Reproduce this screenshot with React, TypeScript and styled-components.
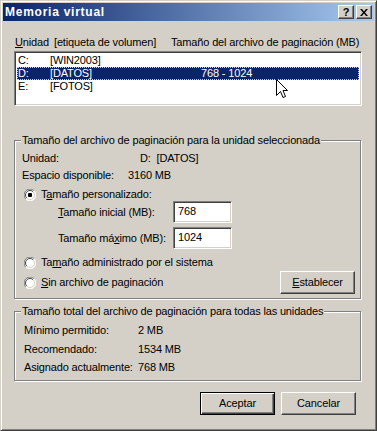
import React from "react";
import styled, { createGlobalStyle } from "styled-components";

const GlobalStyle = createGlobalStyle`
  html, body {
    margin: 0;
    padding: 0;
    background: #d4d0c8;
  }
  body {
    font-family: "Liberation Sans", Arial, sans-serif;
    font-size: 11px;
    letter-spacing: -0.15px;
    color: #000;
  }
`;

// the outer dialog frame, raised 3px border
const Window = styled.div`
  position: relative;
  width: 377px;
  height: 431px;
  box-sizing: border-box;
  background: #d4d0c8;
  border: 1px solid;
  border-color: #d4d0c8 #404040 #404040 #d4d0c8;
  box-shadow: inset 1px 1px #fff, inset -1px -1px #808080;
  padding: 2px;
  overflow: hidden;
`;

const TitleBar = styled.div`
  height: 18px;
  display: flex;
  align-items: center;
  padding: 0 2px;
  background: linear-gradient(to right, #0a246a, #a6caf0);
`;

const Title = styled.div`
  flex: 1;
  color: #fff;
  font-weight: bold;
  font-size: 12px;
  letter-spacing: 0.75px;
  line-height: 14px;
`;

const CaptionButton = styled.div<{ $gap?: number }>`
  width: 16px;
  height: 14px;
  box-sizing: border-box;
  margin-left: ${(p) => p.$gap ?? 0}px;
  background: #d4d0c8;
  border: 1px solid;
  border-color: #fff #404040 #404040 #fff;
  box-shadow: inset -1px -1px #808080;
  display: flex;
  align-items: center;
  justify-content: center;
  font-weight: bold;
  font-size: 11px;
  line-height: 12px;
  letter-spacing: 0;
`;

const Main = styled.div`
  padding: 0 12px 0 11px;
`;

const HeaderRow = styled.div`
  display: flex;
  margin-top: 15px;
  line-height: 13px;
  white-space: nowrap;
`;

const Col = styled.span<{ $w?: number; $pad?: number }>`
  display: inline-block;
  width: ${(p) => (p.$w ? `${p.$w}px` : "auto")};
  padding-left: ${(p) => p.$pad ?? 0}px;
  white-space: nowrap;
`;

const ListBox = styled.div`
  margin-top: 2px;
  height: 55px;
  box-sizing: border-box;
  background: #fff;
  border: 1px solid;
  border-color: #808080 #fff #fff #808080;
  box-shadow: inset 1px 1px #404040, inset -1px -1px #d4d0c8;
  padding: 2px 2px;
`;

const ListRow = styled.div<{ $selected?: boolean }>`
  display: flex;
  height: 13px;
  line-height: 13px;
  padding-left: 1px;
  white-space: nowrap;
  background: ${(p) => (p.$selected ? "#0a246a" : "transparent")};
  color: ${(p) => (p.$selected ? "#fff" : "#000")};
  outline: ${(p) => (p.$selected ? "1px dotted #c8cce0" : "none")};
  outline-offset: -1px;
`;

// etched group box: fieldset with the caption sitting on the top line
const Group = styled.fieldset<{ $top: number }>`
  margin: ${(p) => p.$top}px 0 0 0;
  padding: 0;
  min-width: 0;
  border: 1px solid #808080;
  box-shadow: inset 1px 1px #fff, 1px 1px #fff;
  width: 347px;
  box-sizing: border-box;
`;

const Legend = styled.legend`
  margin-left: 6px;
  padding: 0 1px;
  line-height: 13px;
  background: #d4d0c8;
  white-space: nowrap;
`;

const GroupBody = styled.div<{ $padTop: number; $padBottom: number; $padLeft: number }>`
  padding: ${(p) => p.$padTop}px 5px ${(p) => p.$padBottom}px ${(p) => p.$padLeft}px;
`;

const InfoRow = styled.div<{ $mt?: number }>`
  display: flex;
  line-height: 13px;
  height: 13px;
  margin-top: ${(p) => p.$mt ?? 0}px;
  white-space: nowrap;
`;

const RadioRow = styled.div<{ $mt?: number; $h?: number }>`
  display: flex;
  align-items: center;
  height: ${(p) => p.$h ?? 13}px;
  margin-top: ${(p) => p.$mt ?? 0}px;
  padding-left: 2px;
  line-height: 13px;
  white-space: nowrap;
`;

const RadioLabel = styled.span`
  margin-left: 5px;
  flex: 1;
`;

const FieldRow = styled.div<{ $mt?: number }>`
  display: flex;
  align-items: center;
  height: 22px;
  margin-top: ${(p) => p.$mt ?? 0}px;
  padding-left: 36px;
  white-space: nowrap;
`;

const FieldLabel = styled.span`
  width: 115px;
  line-height: 13px;
`;

const TextField = styled.div`
  width: 59px;
  height: 22px;
  box-sizing: border-box;
  background: #fff;
  border: 1px solid;
  border-color: #808080 #fff #fff #808080;
  box-shadow: inset 1px 1px #404040, inset -1px -1px #d4d0c8;
  padding: 3px 0 0 4px;
  line-height: 13px;
`;

const Button = styled.div<{ $default?: boolean }>`
  width: 75px;
  height: 23px;
  box-sizing: border-box;
  display: flex;
  align-items: center;
  justify-content: center;
  background: #d4d0c8;
  border: 1px solid;
  border-color: ${(p) => (p.$default ? "#000" : "#fff #404040 #404040 #fff")};
  box-shadow: ${(p) =>
    p.$default
      ? "inset 1px 1px #fff, inset -1px -1px #404040, inset -2px -2px #808080"
      : "inset -1px -1px #808080"};
  line-height: 13px;
`;

const ButtonBar = styled.div`
  display: flex;
  justify-content: flex-end;
  gap: 6px;
  margin-top: 11px;
  padding-right: 6px;
`;

const Cursor = styled.svg`
  position: absolute;
  left: 275px;
  top: 78px;
`;

function Radio({ checked }: { checked?: boolean }) {
  return (
    <svg width="12" height="12" viewBox="0 0 12 12">
      <circle cx="6" cy="6" r="5.5" fill="#fff" stroke="none" />
      <path d="M10.2 1.8 A5.5 5.5 0 0 0 1.8 10.2" fill="none" stroke="#808080" />
      <path d="M9.2 2.8 A4.5 4.5 0 0 0 2.8 9.2" fill="none" stroke="#404040" />
      <path d="M1.8 10.2 A5.5 5.5 0 0 0 10.2 1.8" fill="none" stroke="#fff" />
      <path d="M2.8 9.2 A4.5 4.5 0 0 0 9.2 2.8" fill="none" stroke="#d4d0c8" />
      {checked && <rect x="4" y="4" width="4" height="4" rx="1" fill="#000" />}
    </svg>
  );
}

export default function App() {
  return (
    <>
      <GlobalStyle />
      <Window>
        <TitleBar>
          <Title>Memoria virtual</Title>
          <CaptionButton>?</CaptionButton>
          <CaptionButton $gap={2}>
            <svg width="8" height="7" viewBox="0 0 8 7">
              <path d="M0 0h2l2 2.5L6 0h2L5 3.5 8 7H6L4 4.5 2 7H0l3-3.5z" fill="#000" />
            </svg>
          </CaptionButton>
        </TitleBar>
        <Main>
          <HeaderRow>
            <Col $w={39} $pad={1}>
              <u>U</u>nidad
            </Col>
            <Col $w={117}>[etiqueta de volumen]</Col>
            <Col>Tamaño del archivo de paginación (MB)</Col>
          </HeaderRow>
          <ListBox>
            <ListRow>
              <Col $w={32}>C:</Col>
              <Col $w={151}>[WIN2003]</Col>
            </ListRow>
            <ListRow $selected>
              <Col $w={32}>D:</Col>
              <Col $w={151}>[DATOS]</Col>
              <Col>768 - 1024</Col>
            </ListRow>
            <ListRow>
              <Col $w={32}>E:</Col>
              <Col $w={151}>[FOTOS]</Col>
            </ListRow>
          </ListBox>

          <Group $top={28}>
            <Legend>Tamaño del archivo de paginación para la unidad seleccionada</Legend>
            <GroupBody $padTop={5} $padBottom={4} $padLeft={7}>
              <InfoRow>
                <Col $w={118}>Unidad:</Col>
                <Col>D:&nbsp; [DATOS]</Col>
              </InfoRow>
              <InfoRow $mt={4}>
                <Col $w={106}>Espacio disponible:</Col>
                <Col>3160 MB</Col>
              </InfoRow>
              <RadioRow $mt={6}>
                <Radio checked />
                <RadioLabel>
                  T<u>a</u>maño personalizado:
                </RadioLabel>
              </RadioRow>
              <FieldRow>
                <FieldLabel>
                  <u>T</u>amaño inicial (MB):
                </FieldLabel>
                <TextField>768</TextField>
              </FieldRow>
              <FieldRow $mt={4}>
                <FieldLabel>
                  Tamaño má<u>x</u>imo (MB):
                </FieldLabel>
                <TextField>1024</TextField>
              </FieldRow>
              <RadioRow $mt={7}>
                <Radio />
                <RadioLabel>
                  Ta<u>m</u>año administrado por el sistema
                </RadioLabel>
              </RadioRow>
              <RadioRow $mt={2} $h={23}>
                <Radio />
                <RadioLabel>
                  <u>S</u>in archivo de paginación
                </RadioLabel>
                <Button>
                  <span>
                    <u>E</u>stablecer
                  </span>
                </Button>
              </RadioRow>
            </GroupBody>
          </Group>

          <Group $top={6}>
            <Legend>Tamaño total del archivo de paginación para todas las unidades</Legend>
            <GroupBody $padTop={6} $padBottom={6} $padLeft={9}>
              <InfoRow>
                <Col $w={114}>Mínimo permitido:</Col>
                <Col>2 MB</Col>
              </InfoRow>
              <InfoRow $mt={6}>
                <Col $w={114}>Recomendado:</Col>
                <Col>1534 MB</Col>
              </InfoRow>
              <InfoRow $mt={5}>
                <Col $w={114}>Asignado actualmente:</Col>
                <Col>768 MB</Col>
              </InfoRow>
            </GroupBody>
          </Group>

          <ButtonBar>
            <Button $default>Aceptar</Button>
            <Button>Cancelar</Button>
          </ButtonBar>
        </Main>
        <Cursor width="12" height="19" viewBox="0 0 12 19">
          <path
            d="M0.5 0.5 L0.5 16.5 L4.5 12.5 L7 18.5 L9.5 17.5 L7 11.5 L11.5 11.5 Z"
            fill="#fff"
            stroke="#000"
            strokeWidth="1"
          />
        </Cursor>
      </Window>
    </>
  );
}
